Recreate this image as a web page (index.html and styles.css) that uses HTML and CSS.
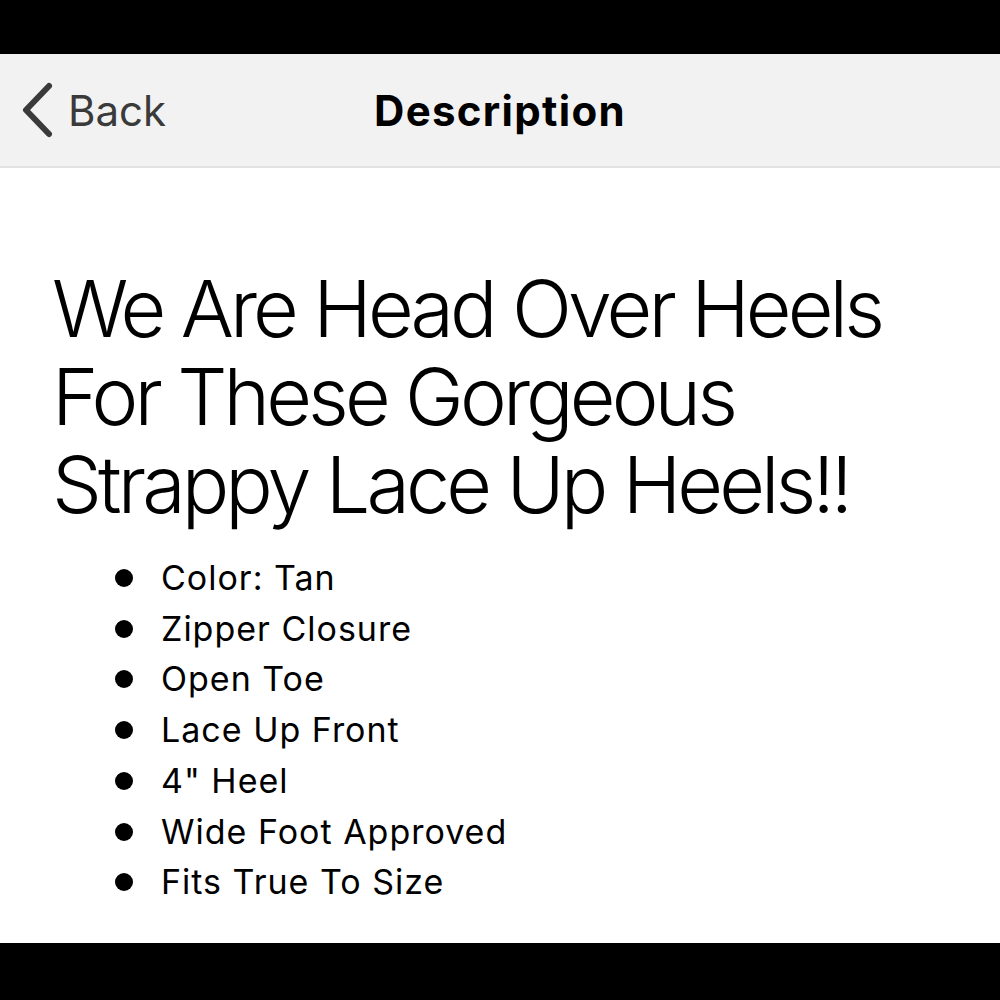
FILE: index.html
```html
<!DOCTYPE html>
<html>
<head>
<meta charset="utf-8">
<link rel="stylesheet" href="styles.css">
</head>
<body>
<div class="screen">
  <div class="status"></div>
  <header class="nav">
    <div class="back">
      <svg class="chev" width="34" height="56" viewBox="0 0 34 56"><path d="M29 4 L6 28 L29 52" fill="none" stroke="#3a3a3a" stroke-width="6" stroke-linecap="round" stroke-linejoin="round"/></svg>
      <span class="back-label">Back</span>
    </div>
    <h1 class="title">Description</h1>
  </header>
  <main class="content">
    <h2 class="headline">We Are Head Over Heels For These Gorgeous Strappy Lace Up Heels!!</h2>
    <ul class="features">
      <li>Color: Tan</li>
      <li>Zipper Closure</li>
      <li>Open Toe</li>
      <li>Lace Up Front</li>
      <li>4" Heel</li>
      <li>Wide Foot Approved</li>
      <li>Fits True To Size</li>
    </ul>
  </main>
  <div class="bottom"></div>
</div>
</body>
</html>
```
FILE: styles.css
```css
html, body {
  margin: 0;
  padding: 0;
  background: #fff;
}
.screen {
  width: 1000px;
  height: 1000px;
  display: flex;
  flex-direction: column;
  font-family: Inter, "Liberation Sans", sans-serif;
  color: #000;
}
.status {
  flex: 0 0 54px;
  background: #000;
}
.nav {
  flex: 0 0 112px;
  box-sizing: content-box;
  background: #f2f2f2;
  border-bottom: 2px solid #e2e2e2;
  display: flex;
  align-items: center;
  justify-content: center;
  position: relative;
}
.back {
  position: absolute;
  left: 20px;
  top: 0;
  bottom: 0;
  display: flex;
  align-items: center;
  gap: 14px;
}
.chev {
  display: block;
}
.back-label {
  font-size: 42px;
  color: #3a3a3a;
  font-weight: 400;
}
.title {
  margin: 0;
  font-size: 42px;
  font-weight: 700;
  letter-spacing: 1.3px;
  color: #000;
}
.content {
  flex: 1 1 auto;
  padding: 96px 0 0 52px;
}
.headline {
  margin: 0;
  font-size: 79px;
  font-weight: 300;
  line-height: 88px;
  letter-spacing: -3.9px;
  width: 900px;
}
.features {
  list-style: none;
  margin: 25px 0 0 0;
  padding: 0 0 0 109px;
  font-size: 34px;
  line-height: 50.7px;
  letter-spacing: 1px;
}
.features li {
  position: relative;
}
.features li::before {
  content: "";
  position: absolute;
  left: -46px;
  top: 16px;
  width: 18px;
  height: 18px;
  border-radius: 50%;
  background: #000;
}
.bottom {
  flex: 0 0 57px;
  background: #000;
}
```
